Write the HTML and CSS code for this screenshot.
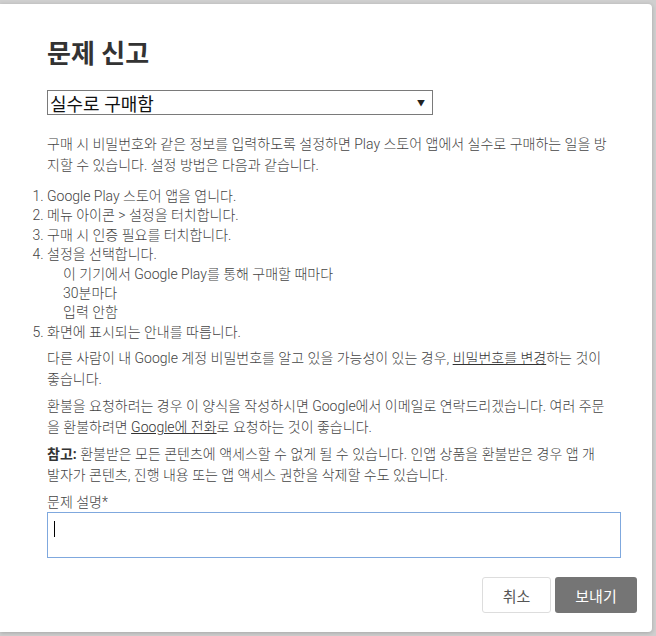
FILE: index.html
```html
<!DOCTYPE html>
<html lang="ko">
<head>
    <meta charset="UTF-8">
    <title>문제 신고</title>
    <link rel="stylesheet" href="styles.css">
</head>
<body>
    <div class="dialog">
        <h1>문제 신고</h1>

        <div class="select-box">
            <span>실수로 구매함</span>
            <span class="arrow">&#9660;</span>
        </div>

        <div class="help">
            <p>구매 시 비밀번호와 같은 정보를 입력하도록 설정하면 Play 스토어 앱에서 실수로 구매하는 일을 방지할 수 있습니다. 설정 방법은 다음과 같습니다.</p>
            <ol>
                <li>Google Play 스토어 앱을 엽니다.</li>
                <li>메뉴 아이콘 &gt; 설정을 터치합니다.</li>
                <li>구매 시 인증 필요를 터치합니다.</li>
                <li>설정을 선택합니다.
                    <ul>
                        <li>이 기기에서 Google Play를 통해 구매할 때마다</li>
                        <li>30분마다</li>
                        <li>입력 안함</li>
                    </ul>
                </li>
                <li>화면에 표시되는 안내를 따릅니다.</li>
            </ol>
            <p>다른 사람이 내 Google 계정 비밀번호를 알고 있을 가능성이 있는 경우, <a href="#">비밀번호를 변경</a>하는 것이 좋습니다.</p>
            <p>환불을 요청하려는 경우 이 양식을 작성하시면 Google에서 이메일로 연락드리겠습니다. 여러 주문을 환불하려면 <a href="#">Google에 전화</a>로 요청하는 것이 좋습니다.</p>
            <p><b>참고:</b> 환불받은 모든 콘텐츠에 액세스할 수 없게 될 수 있습니다. 인앱 상품을 환불받은 경우 앱 개발자가 콘텐츠, 진행 내용 또는 앱 액세스 권한을 삭제할 수도 있습니다.</p>
        </div>

        <label class="field-label">문제 설명*</label>
        <div class="textbox"><span class="caret"></span></div>

        <div class="actions">
            <button class="cancel-btn">취소</button>
            <button class="send-btn">보내기</button>
        </div>
    </div>
</body>
</html>
```

FILE: styles.css
```css
html, body {
    margin: 0;
    padding: 0;
    height: 100%;
}
body {
    background: #cfcfcf;
    font-family: Roboto, "Noto Sans CJK KR", sans-serif;
    padding: 4px 4px 4px 0;
    box-sizing: border-box;
}
.dialog {
    background: #fff;
    height: 100%;
    box-sizing: border-box;
    border-radius: 0 4px 4px 0;
    padding: 31px 31px 0 47px;
    box-shadow: 0 1px 4px rgba(0, 0, 0, 0.2);
}
h1 {
    margin: 0;
    font-size: 26px;
    font-weight: bold;
    color: #333;
    line-height: 38px;
}
.select-box {
    margin-top: 17px;
    width: 386px;
    height: 25px;
    box-sizing: border-box;
    border: 1px solid #7a7a7a;
    display: flex;
    justify-content: space-between;
    align-items: center;
    padding: 0 7px 0 2px;
    font-size: 18px;
    color: #111;
}
.arrow {
    font-size: 8px;
    color: #222;
}
.help {
    margin-top: 19px;
    padding-right: 14px;
    font-size: 14px;
    font-weight: 300;
    line-height: 21px;
    color: #444;
}
.help p {
    margin: 0 0 6px 0;
}
.help ol {
    margin: 11px 0 6px 0;
    padding: 0;
    line-height: 19.4px;
}
.help ul {
    list-style: none;
    margin: 0;
    padding-left: 16px;
}
.help a {
    color: #333;
}
.help b {
    font-weight: bold;
    color: #333;
}
.field-label {
    display: block;
    margin-top: 6px;
    font-size: 14px;
    font-weight: 300;
    color: #444;
    line-height: 20px;
}
.textbox {
    height: 46px;
    box-sizing: border-box;
    border: 1px solid #7fa8de;
    padding: 8px 6px;
}
.caret {
    display: block;
    width: 1px;
    height: 16px;
    background: #000;
}
.actions {
    display: flex;
    justify-content: flex-end;
    gap: 4px;
    margin: 19px -16px 0 0;
}
.actions button {
    height: 36px;
    font-family: Roboto, "Noto Sans CJK KR", sans-serif;
    font-size: 15px;
    border-radius: 3px;
    cursor: pointer;
}
.cancel-btn {
    width: 69px;
    background: #fff;
    border: 1px solid #ddd;
    color: #555;
}
.send-btn {
    width: 82px;
    background: #757575;
    border: none;
    color: #fff;
}
```
